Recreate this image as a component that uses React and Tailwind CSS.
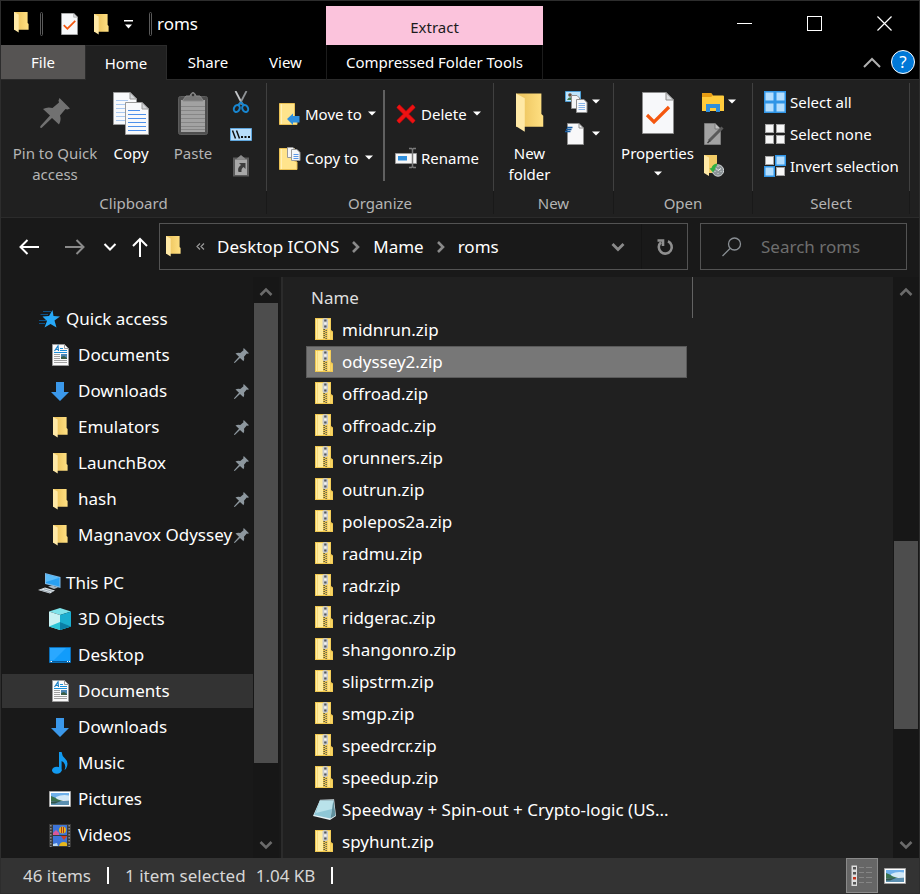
import React, { useState } from 'react';

const sidebar = [
  {
    label: 'Quick access',
    icon: StarIcon,
    items: [
      { label: 'Documents', icon: DocumentsIcon, pinned: true },
      { label: 'Downloads', icon: DownloadIcon, pinned: true },
      { label: 'Emulators', icon: FolderIcon, pinned: true },
      { label: 'LaunchBox', icon: FolderIcon, pinned: true },
      { label: 'hash', icon: FolderIcon, pinned: true },
      { label: 'Magnavox Odyssey', icon: FolderIcon, pinned: true },
    ],
  },
  {
    label: 'This PC',
    icon: ComputerIcon,
    items: [
      { label: '3D Objects', icon: CubeIcon },
      { label: 'Desktop', icon: DesktopIcon },
      { label: 'Documents', icon: DocumentsIcon, current: true },
      { label: 'Downloads', icon: DownloadIcon },
      { label: 'Music', icon: MusicIcon },
      { label: 'Pictures', icon: PictureIcon },
      { label: 'Videos', icon: VideoIcon },
    ],
  },
];

const files = [
  'midnrun.zip',
  'odyssey2.zip',
  'offroad.zip',
  'offroadc.zip',
  'orunners.zip',
  'outrun.zip',
  'polepos2a.zip',
  'radmu.zip',
  'radr.zip',
  'ridgerac.zip',
  'shangonro.zip',
  'slipstrm.zip',
  'smgp.zip',
  'speedrcr.zip',
  'speedup.zip',
  'Speedway + Spin-out + Crypto-logic (US...',
  'spyhunt.zip',
];

/* ---------- icons ---------- */

function FolderIcon({ className = 'w-[15px] h-[21px]' }) {
  return (
    <svg className={className} viewBox="0 0 15 21" aria-hidden="true">
      <defs>
        <linearGradient id="folderBody" x1="0" x2="1">
          <stop offset="0.3" stopColor="#f0c964" />
          <stop offset="1" stopColor="#ffe083" />
        </linearGradient>
      </defs>
      <path d="M0 0H13.6V11L14.6 12V17.8H0Z" fill="url(#folderBody)" />
      <path d="M0 0L4.7 2.6V20.6L0 17.6Z" fill="#ffe9a6" />
    </svg>
  );
}

function ZipIcon() {
  return (
    <svg className="w-[18px] h-[22px]" viewBox="0 0 18 22" aria-hidden="true">
      <path d="M0 0H16V12L18 13.5V22H0Z" fill="#f0c850" />
      <path d="M1 1H8V21H1Z" fill="#ffec9e" />
      <path d="M2.5 1V21" stroke="#f8da7c" />
      <path d="M12.5 1H15.2V21H12.5Z" fill="#ffe287" />
      <path d="M15.8 14L17.2 14.5V21H15.8Z" fill="#f9d666" />
      <path d="M7.5 1.5Q7.5 0 10.2 0T13 1.5V9Q13 11 10.2 11T7.5 9Z" fill="#c9cbcd" />
      <path d="M9.2 2.5H11.5M9.2 8.5H11.5" stroke="#55585b" strokeWidth="2" />
      <path d="M9.2 5.5H11.5" stroke="#f4f4f4" strokeWidth="2" />
      <path d="M9.2 11V21" stroke="#5c5b48" strokeWidth="1.6" strokeDasharray="1 1" />
      <path d="M11.2 12V21" stroke="#6f6d58" strokeWidth="1.6" strokeDasharray="1 1" />
    </svg>
  );
}

function NotepadIcon() {
  return (
    <svg className="w-[23px] h-[22px]" viewBox="0 0 23 22" aria-hidden="true">
      <path d="M7 2L21 1L23 18L17 22L0 18Z" fill="#e8f3f6" />
      <path d="M7 2.5L20.5 2L17.5 20.5L1 17Z" fill="#8fc7d6" />
      <path d="M7 2.5L20.5 2L19 11L3 15Z" fill="#b9e2ea" />
      <path d="M20.5 2L22.5 17.5L17.5 20.5Z" fill="#5f8f9c" />
      <path d="M7.5 1.8H20.5" stroke="#6c7478" strokeWidth="1.6" strokeDasharray="1 1" />
    </svg>
  );
}

function PageCheckIcon({ className }) {
  return (
    <svg className={className} viewBox="0 0 32 42" aria-hidden="true">
      <path d="M0.5 0.5H24L31.5 8V41.5H0.5Z" fill="#f7f8fa" stroke="#8c8c8c" />
      <path d="M24 0.5V8H31.5Z" fill="#dfe1e4" stroke="#8c8c8c" />
      <path d="M5 23L12 30L27 15" fill="none" stroke="#f4570f" strokeWidth="3.2" />
    </svg>
  );
}

function CopyIcon() {
  return (
    <svg className="w-9 h-[43px]" viewBox="0 0 36 43" aria-hidden="true">
      <path d="M0.5 0.5H17L23.5 7V32.5H0.5Z" fill="#f8f9fb" stroke="#9a9a9a" />
      <path d="M17 0.5V7H23.5Z" fill="#d5d7da" stroke="#9a9a9a" />
      <path d="M3 8.5H15M3 12.5H20M3 16.5H20M3 20.5H20M3 24.5H20M3 28.5H20" stroke="#a9c8f0" />
      <path d="M12.5 10.5H29L35.5 17V42.5H12.5Z" fill="#f8f9fb" stroke="#9a9a9a" />
      <path d="M29 10.5V17H35.5Z" fill="#d5d7da" stroke="#9a9a9a" />
      <path d="M15 18.5H27M15 22.5H33M15 26.5H33M15 30.5H33M15 34.5H33M15 38.5H33" stroke="#4d90ea" />
    </svg>
  );
}

function PasteIcon() {
  return (
    <svg className="w-[30px] h-[43px]" viewBox="0 0 30 43" aria-hidden="true">
      <rect x="0.5" y="4.5" width="29" height="38" rx="2" fill="#4e4e4e" stroke="#5c5c5c" />
      <path d="M3 8H27V40H3Z" fill="#a2a2a2" />
      <path d="M3 14.5H27M3 18.5H27M3 22.5H27M3 26.5H27M3 30.5H27M3 34.5H27M3 37.5H27" stroke="#868686" />
      <path d="M5 8L8 4H12Q13 0.5 15 0.5T18 4H22L25 8V9H5Z" fill="#777" stroke="#8b8b8b" />
      <circle cx="15" cy="3" r="1.2" fill="#333" />
    </svg>
  );
}

function PinIcon({ className }) {
  return (
    <svg className={className} viewBox="0 0 30 30" aria-hidden="true">
      <path
        d="M19.5 0L30 10.5L27.5 11.5L25.5 11L20 17.5Q21.5 22 19 26.5L12 20L1.5 30L0 29.5L0.5 28L10 17.5L3 11Q7.5 8.5 12.5 10L19 4.5L18.5 2.5Z"
        fill="currentColor"
      />
    </svg>
  );
}

function ScissorsIcon() {
  return (
    <svg className="w-[22px] h-[22px]" viewBox="0 0 22 22" fill="none" aria-hidden="true">
      <path d="M5.5 0L12.5 13.5" stroke="#c3c6c9" strokeWidth="1.8" />
      <path d="M16.5 0L9.5 13.5" stroke="#8f9396" strokeWidth="1.8" />
      <ellipse cx="6.8" cy="17.5" rx="2.8" ry="3.6" transform="rotate(25 6.8 17.5)" stroke="#1886d0" strokeWidth="2" />
      <ellipse cx="15.2" cy="17.5" rx="2.8" ry="3.6" transform="rotate(-25 15.2 17.5)" stroke="#1886d0" strokeWidth="2" />
      <path d="M8 14L11 11.5L14 14" stroke="#1886d0" strokeWidth="1.8" />
    </svg>
  );
}

function CopyPathIcon() {
  return (
    <svg className="w-[22px] h-[13px]" viewBox="0 0 22 13" aria-hidden="true">
      <path d="M0.5 0.5H21.5V12.5H0.5Z" fill="#b9defc" stroke="#5fa6dc" />
      <path d="M2.5 2.5L5.5 10.5M6.5 2.5L9.5 10.5" stroke="#111" strokeWidth="1.5" />
      <path d="M11 9H13M14.5 9H16.5M18 9H20" stroke="#111" strokeWidth="2" />
    </svg>
  );
}

function PasteShortcutIcon() {
  return (
    <svg className="w-[22px] h-[22px]" viewBox="0 0 22 22" aria-hidden="true">
      <path d="M3 2.5H19V21.5H3Z" fill="#5a5a5a" />
      <path d="M5 4.5H17V20H5Z" fill="#a8a8a8" />
      <path d="M6 4.5L8 2.5L11 0L14 2.5L16 4.5Z" fill="#8a8a8a" />
      <path d="M9 8H15.5V14L13.5 12Q11 13.5 11.5 17H8.5Q7 12.5 11 10Z" fill="#3e3e3e" />
    </svg>
  );
}

function MoveToIcon() {
  return (
    <svg className="w-[22px] h-[22px]" viewBox="0 0 22 22" aria-hidden="true">
      <path d="M0.5 0.5H15.5V14L18 15V21.5H0.5Z" fill="#ffe48c" stroke="#eac155" />
      <path d="M2.5 1V21" stroke="#fff0b8" />
      <path d="M8 16L14 10.5V13H20.5V19.5H14V22Z" fill="#2f8fdd" />
    </svg>
  );
}

function CopyToIcon() {
  return (
    <svg className="w-[22px] h-[23px]" viewBox="0 0 22 23" aria-hidden="true">
      <path d="M0.5 1.5H15.5V14L18 15V22.5H0.5Z" fill="#ffe48c" stroke="#eac155" />
      <path d="M2.5 2V22" stroke="#fff0b8" />
      <path d="M8.5 0.5H14L16.5 3V10.5H8.5Z" fill="#f5f6f8" stroke="#999" />
      <path d="M12.5 2.5H18L21 5.5V13.5H12.5Z" fill="#f5f6f8" stroke="#999" />
      <path d="M14.5 7.5H19.5M14.5 9.5H19.5M14.5 11.5H19.5" stroke="#5b97e8" />
    </svg>
  );
}

function DeleteIcon() {
  return (
    <svg className="w-[22px] h-[22px]" viewBox="0 0 22 22" aria-hidden="true">
      <path d="M3 3L19 19M19 3L3 19" stroke="#a30c10" strokeWidth="4.6" />
      <path d="M3 3L19 19M19 3L3 19" stroke="#ee1212" strokeWidth="3.2" />
    </svg>
  );
}

function RenameIcon() {
  return (
    <svg className="w-[22px] h-[22px]" viewBox="0 0 22 22" fill="none" aria-hidden="true">
      <path d="M0.5 6.5H21.5V16.5H0.5Z" fill="#f7f7f7" stroke="#999" />
      <path d="M3 9H12V13.5H3Z" fill="#2f8fdd" />
      <path d="M14 1.5H16.5L17.5 2.5L18.5 1.5H21M17.5 2.5V20M14 20.5H16.5L17.5 19.5L18.5 20.5H21" stroke="#7b7b7b" strokeWidth="1.5" />
    </svg>
  );
}

function NewItemIcon() {
  return (
    <svg className="w-[23px] h-[22px]" viewBox="0 0 23 22" aria-hidden="true">
      <path d="M0.5 0.5H15.5V10.5H0.5Z" fill="#bfe4fb" stroke="#4d9fd6" />
      <path d="M2 9Q4 5 7 7L9 9Z" fill="#3f7a52" />
      <circle cx="5" cy="4" r="1.8" fill="#6b4a35" />
      <path d="M6.5 4.5H12L14.5 7V17.5H6.5Z" fill="#f4f5f7" stroke="#8e8e8e" />
      <path d="M11.5 8.5H19L22 11.5V21.5H11.5Z" fill="#f8f9fb" stroke="#8e8e8e" />
      <path d="M13.5 12.5H20M13.5 14.5H20M13.5 16.5H20M13.5 18.5H20" stroke="#8ab6ea" />
    </svg>
  );
}

function EasyAccessIcon() {
  return (
    <svg className="w-[23px] h-[22px]" viewBox="0 0 23 22" aria-hidden="true">
      <path d="M2.5 0.5H14L18.5 5V21.5H2.5Z" fill="#f8f8f9" stroke="#8e8e8e" />
      <path d="M14 0.5V5H18.5" fill="none" stroke="#8e8e8e" />
      <path d="M2 4.5H7.5M1 6.5H6.5M0 8.5H5.5" stroke="#1b5fa3" strokeWidth="1.3" />
    </svg>
  );
}

function OpenIcon() {
  return (
    <svg className="w-[22px] h-[19px]" viewBox="0 0 22 19" aria-hidden="true">
      <path d="M0 1Q0 0 1 0H9L11 2.5H21Q22 2.5 22 3.5V18H0Z" fill="#ffcb3c" />
      <path d="M0 4V1Q0 0 1 0H9L11 2.5L9 4Z" fill="#e69c13" />
      <path d="M4 19V11H18V19H14V15H8V19Z" fill="#2f8fdd" />
    </svg>
  );
}

function EditIcon() {
  return (
    <svg className="w-[22px] h-[22px]" viewBox="0 0 22 22" aria-hidden="true">
      <path d="M2.5 0.5H13L18.5 6V21.5H2.5Z" fill="#a3a3a3" stroke="#7b7b7b" />
      <path d="M13 0.5V6H18.5" fill="#c2c2c2" stroke="#7b7b7b" />
      <path d="M7 18L20.5 4.5" stroke="#5a5a5a" strokeWidth="3" />
      <path d="M5.5 20L8 17.5" stroke="#3e3e3e" strokeWidth="1.5" />
    </svg>
  );
}

function HistoryIcon() {
  return (
    <svg className="w-[22px] h-[22px]" viewBox="0 0 22 22" aria-hidden="true">
      <path d="M2 0H15V11H17V18H2Z" fill="#f2cb66" />
      <path d="M2 0L7 2.5V21L2 18Z" fill="#ffe9a6" />
      <circle cx="16" cy="15.5" r="5.7" fill="#8c9497" stroke="#d3d6d8" />
      <path d="M13 12.5L16 15.5L19 13.5" fill="none" stroke="#eef0f1" />
      <path d="M12.5 16.5H13.5M16 19V18M18.5 16.5H19.500M16 11V12" stroke="#d3d6d8" />
      <path d="M15 8.5Q10.5 9 9.5 13L7.5 13.5L11 17.5L13.5 13.5Q13 11.5 15 10.5Z" fill="#31b042" />
    </svg>
  );
}

// lit: which of the four squares are drawn as selected
function SquaresIcon({ lit }) {
  const cells = [[0, 0], [11, 0], [0, 11], [11, 11]];
  return (
    <svg className="w-[22px] h-[22px]" viewBox="0 0 22 22" aria-hidden="true">
      {cells.map(([x, y], i) =>
        lit[i] ? (
          <g key={i}>
            <rect x={x} y={y} width="11" height="11" fill="#3095e6" />
            <rect x={x + 1.5} y={y + 1.5} width="8" height="8" fill="#b4defe" />
          </g>
        ) : (
          <rect key={i} x={x + 1.5} y={y + 1.5} width="8" height="8" fill="#f7f7f7" stroke="#a5a5a5" />
        )
      )}
    </svg>
  );
}

function StarIcon() {
  return (
    <svg className="w-[22px] h-[18px]" viewBox="0 0 22 18" aria-hidden="true">
      <path d="M5 1.5H13M2.5 4.5H10M1 10.5H8M1 13.5H7" stroke="#0d5288" />
      <path d="M14.5 0L15.5 6L22 6.5L16.5 10.5L18.5 17.5L12.5 14L6.5 17.5L9 11L4.5 6.5L11 6Z" fill="#27a9f8" />
    </svg>
  );
}

function DocumentsIcon() {
  return (
    <svg className="w-[17px] h-[22px]" viewBox="0 0 17 22" aria-hidden="true">
      <path d="M0.5 0.5H12.5L16.5 4.5V21.5H0.5Z" fill="#fafafa" stroke="#9a9a9a" />
      <path d="M12.5 0.5V4.5H16.5" fill="none" stroke="#9a9a9a" />
      <path d="M2.5 7L6 2L6.5 7M3.5 5.5H6" fill="none" stroke="#1b7fc4" strokeWidth="1.2" />
      <path d="M8 4.5H11M8 6.5H15M2 8.5H15" stroke="#1b8fd8" />
      <path d="M2 10.5H8M2 12.5H8M2 14.5H8M2 16.5H15M2 18.5H15" stroke="#a0a0a0" />
      <path d="M9 10H15V15H9Z" fill="#4b86b4" />
      <path d="M9 13L12 12L15 14V15H9Z" fill="#3a5e46" />
    </svg>
  );
}

function DownloadIcon() {
  return (
    <svg className="w-[18px] h-[19px]" viewBox="0 0 18 19" aria-hidden="true">
      <path d="M5 0H13V10H18L9 19L0 10H5Z" fill="#3b98ea" />
    </svg>
  );
}

function ComputerIcon() {
  return (
    <svg className="w-[23px] h-[21px]" viewBox="0 0 23 21" aria-hidden="true">
      <path d="M7 0L22.5 4V15L7 11Z" fill="#7fb9e6" />
      <path d="M8 1.3L21.5 4.8V13.5L8 10Z" fill="#29a0f2" />
      <path d="M8 1.3L21.5 4.8L8 9Z" fill="#5cbcf8" />
      <path d="M10 13.5L14 12.5L20 14.5L16 16Z" fill="#a9b6c0" />
      <path d="M0 17L7 14.5L17 17.5L12 20.5Z" fill="#dfe6eb" />
      <path d="M3 17L12 19.5M6 15.8L15 18.5" stroke="#8795a0" strokeWidth="0.8" />
    </svg>
  );
}

function CubeIcon() {
  return (
    <svg className="w-[22px] h-[22px]" viewBox="0 0 22 22" aria-hidden="true">
      <path d="M11 0L22 3.5L11 7L0 3.5Z" fill="#7fe3ea" />
      <path d="M0 3.5L11 7V22L0 18.5Z" fill="#c9f2f3" />
      <path d="M22 3.5L11 7V22L22 18.5Z" fill="#1aaed0" />
      <path d="M0 18.5L11 14L22 18.5L11 22Z" fill="#2cc4d6" />
      <path d="M11 14L22 18.5L11 22Z" fill="#0b7ea6" />
    </svg>
  );
}

function DesktopIcon() {
  return (
    <svg className="w-[22px] h-4" viewBox="0 0 22 16" aria-hidden="true">
      <path d="M0.5 0.5H21.5V15.5H0.5Z" fill="#119cfb" stroke="#0b6fb8" />
      <path d="M1 1H17L5 13H1Z" fill="#2aa8ff" />
      <path d="M1 14.5H21" stroke="#0a5a98" />
      <path d="M1.5 14.5H3M18 14.5H19M20 14.5H21" stroke="#fff" />
    </svg>
  );
}

function MusicIcon() {
  return (
    <svg className="w-4 h-[22px]" viewBox="0 0 16 22" aria-hidden="true">
      <ellipse cx="4.8" cy="18.3" rx="4.8" ry="3.5" fill="#129af0" />
      <path d="M7 0H9.6Q10 4 13 6.5Q16.5 9.5 15 14.5Q14 17.5 12.5 18Q15 12 9.6 9V18.5H7Z" fill="#129af0" />
    </svg>
  );
}

function PictureIcon() {
  return (
    <svg className="w-[22px] h-4" viewBox="0 0 22 16" aria-hidden="true">
      <path d="M0.5 0.5H21.5V15.5H0.5Z" fill="#fff" stroke="#a5a5a5" />
      <path d="M2 2H20V9H2Z" fill="#6fb0ea" />
      <path d="M7 6Q13 3 20 4.5V9H7Z" fill="#d3e9f8" />
      <path d="M2 5Q6 6 9 8.5L16 10.5H2Z" fill="#3b7350" />
      <path d="M2 10.5L20 9.5V14H2Z" fill="#5b8fb0" />
      <path d="M2 10.5L12 10L6 12.5H2Z" fill="#31564a" />
    </svg>
  );
}

function VideoIcon() {
  return (
    <svg className="w-[22px] h-[23px]" viewBox="0 0 22 23" aria-hidden="true">
      <path d="M0 0H22V23H0Z" fill="#3a3a3a" />
      <path d="M1.8 1V23M20.2 1V23" stroke="#8a8a8a" strokeWidth="1.6" strokeDasharray="1.5 1.5" />
      <path d="M4 1H18V11H4ZM4 12H18V22H4Z" fill="#3d74d8" />
      <circle cx="13.5" cy="6" r="3.5" fill="#e7b81c" />
      <path d="M12.5 3V9M14.5 3V9" stroke="#b3341e" />
      <path d="M4 9L7 6L10 9V11H4Z" fill="#d9589a" />
      <path d="M12 12H18L15 16Z" fill="#d23f24" />
      <path d="M10 22Q11 18 14.5 18T18 20V22Z" fill="#e7b81c" />
      <path d="M4 20L8 19L9 22H4Z" fill="#b8d8f5" />
    </svg>
  );
}

function Caret() {
  return (
    <svg className="w-2 h-[5px] shrink-0" viewBox="0 0 8 5" aria-hidden="true">
      <path d="M0 0.5H8L4 4.5Z" fill="#fff" />
    </svg>
  );
}

function Chevron({ d, className, width = 2 }) {
  return (
    <svg className={className} viewBox="0 0 14 14" fill="none" stroke="currentColor" strokeWidth={width} aria-hidden="true">
      <path d={d} />
    </svg>
  );
}

const UP = 'M1.500 10L7 4.500L12.500 10';
const DOWN = 'M1.500 4L7 9.500L12.500 4';
const RIGHT = 'M4 2L9 7L4 12';

/* ---------- header ---------- */

function Divider() {
  return <span className="w-[3px] h-6 rounded-sm border border-[#5a5a5a]" />;
}

function Header() {
  return (
    <header className="flex bg-black text-[15px]">
      <div className="w-[325px] shrink-0">
        <div className="flex items-center h-11 pl-[13px] pt-0.5">
          <FolderIcon className="w-[15px] h-[21px] mr-[11px] mb-1" />
          <Divider />
          <button aria-label="Properties" className="ml-[18px]">
            <PageCheckIcon className="w-[17px] h-[22px]" />
          </button>
          <button aria-label="New folder" className="ml-4">
            <FolderIcon />
          </button>
          <button aria-label="Customize Quick Access Toolbar" className="ml-[15px] mr-4">
            <svg className="w-[9px] h-[9px]" viewBox="0 0 9 9" aria-hidden="true">
              <path d="M0 0H9V1.5H0ZM1 4.5H8L4.5 8.5Z" fill="#fff" />
            </svg>
          </button>
          <Divider />
          <span className="ml-[5px] text-[17px] leading-6">roms</span>
        </div>
        <nav className="flex h-[35px]">
          <button className="w-21 bg-[#565453] border-b border-[#2b2b2b]">File</button>
          <button className="w-[82px] bg-[#202020] border border-b-0 border-[#2b2b2b]">Home</button>
          <button className="w-[82px] border-b border-[#2b2b2b]">Share</button>
          <button className="grow pr-3 pl-2 text-center border-b border-[#2b2b2b]">View</button>
        </nav>
      </div>
      <div className="w-[217px] shrink-0 pt-[5px]">
        <div className="flex items-center justify-center h-[39px] pt-1 bg-[#fbc3dc] text-[#1c1c1c]">
          Extract
        </div>
        <button className="block w-full h-[35px] border-x border-b border-x-[#1c1c1c] border-b-[#2b2b2b] whitespace-nowrap">
          Compressed Folder Tools
        </button>
      </div>
      <div className="grow flex flex-col">
        <div className="flex justify-end h-11">
          <button aria-label="Minimize" className="flex items-center justify-center w-[70px]">
            <span className="w-[15px] h-px bg-white" />
          </button>
          <button aria-label="Maximize" className="flex items-center justify-center w-[70px]">
            <span className="w-[15px] h-[15px] border border-white" />
          </button>
          <button aria-label="Close" className="flex items-center justify-center w-[70px]">
            <svg className="w-[15px] h-[15px]" viewBox="0 0 16 16" stroke="#fff" strokeWidth="1.3" aria-hidden="true">
              <path d="M0.5 0.5L15.5 15.5M15.5 0.5L0.5 15.5" />
            </svg>
          </button>
        </div>
        <div className="flex justify-end items-center gap-2.5 h-[35px] pr-1 border-b border-[#2b2b2b]">
          <button aria-label="Minimize the Ribbon" className="text-[#b0b0b0]">
            <svg className="w-[18px] h-[11px]" viewBox="0 0 18 11" fill="none" stroke="currentColor" strokeWidth="2" aria-hidden="true">
              <path d="M1 10L9 2L17 10" />
            </svg>
          </button>
          <button
            aria-label="Help"
            className="w-6 h-6 rounded-full bg-[#0078d7] border border-white text-[17px] leading-[22px]"
          >
            ?
          </button>
        </div>
      </div>
    </header>
  );
}

/* ---------- ribbon ---------- */

function Group({ label, className, children }) {
  return (
    <section className={`flex ${className}`}>
      <div className="grow flex flex-col">
        <div className="flex grow">{children}</div>
        <h2 className="h-6 text-center leading-[26px] text-[#b4b4b4]">{label}</h2>
      </div>
      <div className="flex flex-col w-px">
        <span className="h-[108px] bg-[#404040]" />
        <span className="grow bg-[#191919]" />
      </div>
    </section>
  );
}

function BigButton({ icon, className, children }) {
  return (
    <button className={`flex flex-col items-center pt-1.5 leading-[21px] ${className}`}>
      <span className="flex items-center justify-center h-12 mb-1.5">{icon}</span>
      {children}
    </button>
  );
}

function SmallButton({ icon, label, caret, text }) {
  return (
    <button aria-label={label} className="flex items-center h-8 whitespace-nowrap">
      <span className="flex justify-center w-[23px] mr-1">{icon}</span>
      {text}
      {caret && <span className={`flex mb-0.5 ${text ? 'ml-1.5' : ''}`}><Caret /></span>}
    </button>
  );
}

function Ribbon() {
  return (
    <div className="flex h-[138px] pt-[3px] pb-[3px] bg-[#202020] border-b border-[#2b2b2b] text-[15px]">
      <Group label="Clipboard" className="w-[266px]">
        <BigButton className="w-[108px] text-[#b4b4b4]" icon={<PinIcon className="w-[30px] h-[30px] text-[#717171]" />}>
          Pin to Quick<br />access
        </BigButton>
        <BigButton className="w-11" icon={<CopyIcon />}>Copy</BigButton>
        <BigButton className="w-20 text-[#b4b4b4]" icon={<PasteIcon />}>Paste</BigButton>
        <div className="flex flex-col pt-[3px] -ml-1">
          <SmallButton label="Cut" icon={<ScissorsIcon />} />
          <SmallButton label="Copy path" icon={<CopyPathIcon />} />
          <SmallButton label="Paste shortcut" icon={<PasteShortcutIcon />} />
        </div>
      </Group>
      <Group label="Organize" className="w-[227px]">
        <div className="flex flex-col gap-3 pt-[15px] pl-[11px] w-[116px]">
          <SmallButton icon={<MoveToIcon />} text="Move to" caret />
          <SmallButton icon={<CopyToIcon />} text="Copy to" caret />
        </div>
        <span className="w-0.5 h-[91px] mt-[7px] bg-[#606060]" />
        <div className="flex flex-col gap-3 pt-[15px] pl-[9px]">
          <SmallButton icon={<DeleteIcon />} text="Delete" caret />
          <SmallButton icon={<RenameIcon />} text="Rename" />
        </div>
      </Group>
      <Group label="New" className="w-[120px]">
        <BigButton className="w-[71px]" icon={<FolderIcon className="w-7 h-10" />}>
          New<br />folder
        </BigButton>
        <div className="flex flex-col pt-[3px]">
          <SmallButton label="New item" icon={<NewItemIcon />} caret />
          <SmallButton label="Easy access" icon={<EasyAccessIcon />} caret />
        </div>
      </Group>
      <Group label="Open" className="w-[139px]">
        <BigButton className="w-[87px]" icon={<PageCheckIcon className="w-8 h-[42px]" />}>
          Properties
          <span className="pt-[7px]"><Caret /></span>
        </BigButton>
        <div className="flex flex-col pt-[3px]">
          <SmallButton label="Open" icon={<OpenIcon />} caret />
          <SmallButton label="Edit" icon={<EditIcon />} />
          <SmallButton label="History" icon={<HistoryIcon />} />
        </div>
      </Group>
      <Group label="Select" className="w-[157px]">
        <div className="flex flex-col pt-[3px] pl-[10px]">
          <SmallButton icon={<SquaresIcon lit={[1, 1, 1, 1]} />} text="Select all" />
          <SmallButton icon={<SquaresIcon lit={[0, 0, 0, 0]} />} text="Select none" />
          <SmallButton icon={<SquaresIcon lit={[0, 1, 1, 0]} />} text="Invert selection" />
        </div>
      </Group>
    </div>
  );
}

/* ---------- address bar ---------- */

function AddressBar() {
  return (
    <div className="flex items-center pt-[5px] pb-[7px] pl-[18px] pr-3 bg-[#191919]">
      <div className="flex items-center w-[140px] text-white">
        <button aria-label="Back">
          <svg className="w-5 h-5" viewBox="0 0 20 20" fill="none" stroke="currentColor" strokeWidth="2" aria-hidden="true">
            <path d="M20 10H1.5M8.5 3L1.5 10L8.5 17" />
          </svg>
        </button>
        <button aria-label="Forward" className="ml-[26px] text-[#8a8a8a]">
          <svg className="w-5 h-5" viewBox="0 0 20 20" fill="none" stroke="currentColor" strokeWidth="2" aria-hidden="true">
            <path d="M0 10H18.5M11.5 3L18.5 10L11.5 17" />
          </svg>
        </button>
        <button aria-label="Recent locations" className="ml-[18px]">
          <Chevron d={DOWN} className="w-3.5 h-3.5" />
        </button>
        <button aria-label="Up" className="ml-[15px]">
          <svg className="w-4 h-5" viewBox="0 0 16 20" fill="none" stroke="currentColor" strokeWidth="2" aria-hidden="true">
            <path d="M8 20V2M1 9L8 2L15 9" />
          </svg>
        </button>
      </div>
      <div className="grow flex items-center h-[47px] pl-1.5 border border-[#535353]">
        <FolderIcon />
        <svg className="w-[9px] h-[7px] ml-[15px] mr-3 text-[#9a9a9a]" viewBox="0 0 9 7" fill="none" stroke="currentColor" strokeWidth="1.2" aria-hidden="true">
          <path d="M4 0.5L1 3.5L4 6.5M8 0.5L5 3.5L8 6.5" />
        </svg>
        <nav className="flex items-center text-[17px] leading-6">
          <button>Desktop ICONS</button>
          <Chevron d={RIGHT} width={2.6} className="w-3.5 h-3.5 mx-2.5 text-[#8a8a8a]" />
          <button>Mame</button>
          <Chevron d={RIGHT} width={2.6} className="w-3.5 h-3.5 mx-2.5 text-[#8a8a8a]" />
          <button>roms</button>
        </nav>
        <button aria-label="Previous locations" className="ml-auto mr-4 text-[#8a8a8a]">
          <Chevron d={DOWN} width={2.8} className="w-3.5 h-3.5" />
        </button>
        <button aria-label="Refresh" className="flex items-center justify-center w-[46px] h-full border-l border-[#141414] text-[#8f8f8f]">
          <svg className="w-[18px] h-[18px]" viewBox="0 0 18 18" fill="none" stroke="currentColor" strokeWidth="2.6" aria-hidden="true">
            <path d="M5 4.2A6.5 6.5 0 1 0 12 3.2" />
            <path d="M1.5 2.5H7V8" />
          </svg>
        </button>
      </div>
      <label className="flex items-center w-[207px] h-[47px] ml-3 pl-[21px] border border-[#535353] text-[#8a8f94]">
        <svg className="w-5 h-5 shrink-0" viewBox="0 0 20 20" fill="none" stroke="currentColor" strokeWidth="1.3" aria-hidden="true">
          <circle cx="12.5" cy="7" r="6" />
          <path d="M8 11.5L0.5 19" />
        </svg>
        <input
          type="text"
          aria-label="Search roms"
          placeholder="Search roms"
          className="w-full min-w-0 ml-[19px] bg-transparent outline-none text-[17px] leading-6 text-white placeholder:text-[#6e6e6e]"
        />
      </label>
    </div>
  );
}

/* ---------- body ---------- */

function ScrollBar({ before, thumb, after }) {
  return (
    <div className="flex flex-col items-center shrink-0 w-[26px] bg-[#171717] text-[#6b6b6b]">
      <button aria-label="Scroll up" className="flex items-center justify-center h-[26px] pt-1">
        <Chevron d={UP} width={2.6} className="w-3.5 h-3.5" />
      </button>
      <span className={before} />
      <span className={`w-6 bg-[#4d4d4d] ${thumb}`} />
      <span className={after} />
      <button aria-label="Scroll down" className="flex items-center justify-center h-[26px]">
        <Chevron d={DOWN} width={2.6} className="w-3.5 h-3.5" />
      </button>
    </div>
  );
}

function Sidebar() {
  return (
    <aside className="flex shrink-0 w-[282px] pr-0.5 border-r-2 border-[#2b2b2b] bg-[#191919]">
      <div className="grow min-w-0 flex flex-col gap-3.5 pt-[25px] pl-px text-[17px] leading-6">
        {sidebar.map((section) => (
          <ul key={section.label} className="flex flex-col gap-0.5">
            <li>
              <button className="flex items-center gap-[5px] w-full h-[34px] pl-[35px]">
                <span className="flex justify-center w-6"><section.icon /></span>
                {section.label}
              </button>
            </li>
            {section.items.map((item) => (
              <li key={item.label} className={item.current ? 'bg-[#333]' : ''}>
                <button className="flex items-center w-full h-[34px] pl-[46px] pr-1">
                  <span className="flex justify-center shrink-0 w-6 mr-1.5"><item.icon /></span>
                  <span className="grow whitespace-nowrap text-left">{item.label}</span>
                  {item.pinned && <PinIcon className="w-[15px] h-[15px] shrink-0 text-[#8d979e]" />}
                </button>
              </li>
            ))}
          </ul>
        ))}
      </div>
      <ScrollBar before="hidden" thumb="flex-[460]" after="flex-[69]" />
    </aside>
  );
}

function FileList() {
  const [selected, setSelected] = useState('odyssey2.zip');

  return (
    <main className="grow flex bg-[#202020]">
      <div className="grow pl-[23px]">
        <table className="w-[387px] text-[17px] leading-6">
          <thead>
            <tr>
              <th className="p-0 font-normal text-left text-[#dedede]">
                <div className="flex justify-between h-[37px] pl-[5px]">
                  <span className="pt-[9px]">Name</span>
                  <span className="w-px h-[41px] bg-[#636363]" />
                </div>
              </th>
            </tr>
          </thead>
          <tbody>
            {files.map((name) => (
              <tr key={name} onClick={() => setSelected(name)}>
                <td className="p-0">
                  <div
                    className={`flex items-center h-8 w-[381px] pl-[5px] border ${
                      name === selected ? 'bg-[#777] border-[#5a5a5a]' : 'border-transparent'
                    }`}
                  >
                    <span className="flex justify-center w-6 mr-1.5 mb-0.5">
                      {name.endsWith('.zip') ? <ZipIcon /> : <NotepadIcon />}
                    </span>
                    <span className="whitespace-nowrap">{name}</span>
                  </div>
                </td>
              </tr>
            ))}
          </tbody>
        </table>
      </div>
      <ScrollBar before="flex-[238]" thumb="flex-[188]" after="flex-[103]" />
    </main>
  );
}

function StatusBar() {
  return (
    <footer className="flex items-center h-[35px] pl-[22px] bg-[#333] text-[17px] leading-6 text-[#d6d6d6]">
      <span>46 items</span>
      <span className="w-0.5 h-[17px] mx-4 bg-white" />
      <span>1 item selected</span>
      <span className="ml-2.5">1.04 KB</span>
      <span className="w-0.5 h-[17px] ml-4 bg-white" />
      <button aria-label="Details view" className="flex items-center justify-center w-8 h-full ml-auto bg-[#666] border border-[#8a8a8a]">
        <svg className="w-[22px] h-[22px]" viewBox="0 0 22 22" aria-hidden="true">
          <path d="M0.5 0.5H6V21H0.5Z" fill="#ddd" />
          <path d="M2 2H5V4.5H2ZM2 7H5V9.5H2ZM2 17H5V19.5H2Z" fill="#555" />
          <path d="M2 12H5V14.5H2Z" fill="#c2331c" />
          <path d="M8 2.5H13M15 2.5H21M8 7.5H13M15 7.5H21M8 12.5H13M15 12.5H21M8 17.5H13M15 17.5H21" stroke="#858585" />
        </svg>
      </button>
      <button aria-label="Large icons view" className="ml-1.5 mr-[13px]">
        <PictureIcon />
      </button>
    </footer>
  );
}

export default function App() {
  return (
    <div className="flex flex-col min-h-screen border border-[#2d2d2d] bg-[#191919] text-white font-['Noto_Sans','Open_Sans',sans-serif]">
      <Header />
      <Ribbon />
      <AddressBar />
      <div className="grow flex">
        <Sidebar />
        <FileList />
      </div>
      <StatusBar />
    </div>
  );
}
